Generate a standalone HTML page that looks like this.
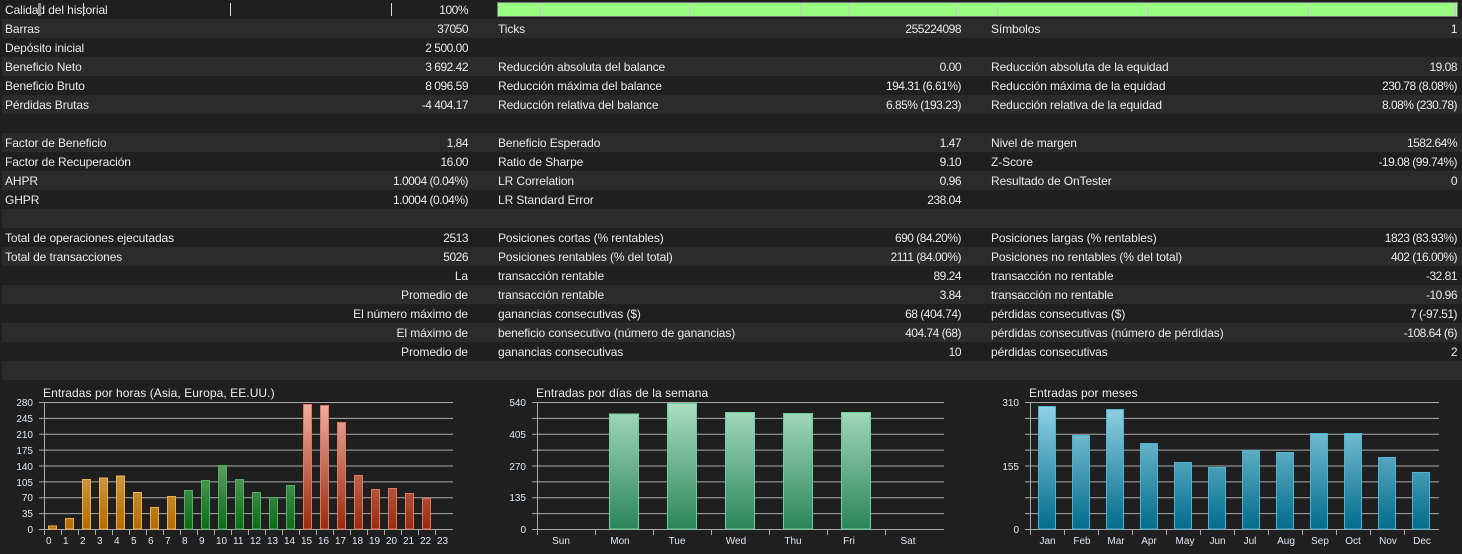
<!DOCTYPE html>
<html lang="es"><head><meta charset="utf-8"><title>Informe</title>
<style>
html,body{margin:0;padding:0;background:#1f1f1f}
#p{position:relative;width:1462px;height:554px;overflow:hidden;background:#1f1f1f;font:12px "Liberation Sans",sans-serif;color:#ebebeb}
.r{position:absolute;left:2px;right:0;height:19px;line-height:19px}
.l{background:#2b2b2b}
.r span{position:absolute;top:1px;white-space:nowrap}
.a,.c,.e{letter-spacing:-.1px}
.a{left:3px}.c{left:496px}.e{left:989px}
.b,.d,.f{letter-spacing:-.5px}
.b{right:994px}.d{right:501px}.f{right:5px}
.w{letter-spacing:-.1px!important}
#bar{position:absolute;left:497px;top:2px;width:959px;height:13px;border:1px solid #777;background:#99ff80}
#bar i{position:absolute;top:0;height:13px;width:1px;background:#c8c8c8}
.t{position:absolute;top:3px;height:13px;width:1px;background:#ddd}
svg{position:absolute;left:0;top:0}
svg text{font-family:"Liberation Sans",sans-serif}
.g{stroke:#aaa;stroke-width:1;fill:none}
.n{font-size:10px;fill:#dfe9f5}
.h{font-size:12px;fill:#eee;letter-spacing:.07px}
</style></head><body><div id="p">
<div class="r" style="top:0"><span class="a">Calidad del historial</span><span class="b">100%</span></div>
<div class="t" style="left:38px;width:3px;background:#8e8e98"></div><div class="t" style="left:83px"></div><div class="t" style="left:230px"></div><div class="t" style="left:391px"></div>
<div id="bar"><i style="left:42px"></i><i style="left:191px"></i><i style="left:302px"></i><i style="left:350px"></i><i style="left:458px"></i><i style="left:499px"></i><i style="left:649px"></i><i style="left:810px"></i><i style="left:956px;width:2px"></i></div>
<div class="r l" style="top:19px"><span class="a">Barras</span><span class="b">37050</span><span class="c">Ticks</span><span class="d">255224098</span><span class="e">Símbolos</span><span class="f">1</span></div>
<div class="r" style="top:38px"><span class="a">Depósito inicial</span><span class="b">2 500.00</span></div>
<div class="r l" style="top:57px"><span class="a">Beneficio Neto</span><span class="b">3 692.42</span><span class="c">Reducción absoluta del balance</span><span class="d">0.00</span><span class="e">Reducción absoluta de la equidad</span><span class="f">19.08</span></div>
<div class="r" style="top:76px"><span class="a">Beneficio Bruto</span><span class="b">8 096.59</span><span class="c">Reducción máxima del balance</span><span class="d">194.31 (6.61%)</span><span class="e">Reducción máxima de la equidad</span><span class="f">230.78 (8.08%)</span></div>
<div class="r l" style="top:95px"><span class="a">Pérdidas Brutas</span><span class="b">-4 404.17</span><span class="c">Reducción relativa del balance</span><span class="d">6.85% (193.23)</span><span class="e">Reducción relativa de la equidad</span><span class="f">8.08% (230.78)</span></div>
<div class="r l" style="top:133px"><span class="a">Factor de Beneficio</span><span class="b">1.84</span><span class="c">Beneficio Esperado</span><span class="d">1.47</span><span class="e">Nivel de margen</span><span class="f">1582.64%</span></div>
<div class="r" style="top:152px"><span class="a">Factor de Recuperación</span><span class="b">16.00</span><span class="c">Ratio de Sharpe</span><span class="d">9.10</span><span class="e">Z-Score</span><span class="f">-19.08 (99.74%)</span></div>
<div class="r l" style="top:171px"><span class="a">AHPR</span><span class="b">1.0004 (0.04%)</span><span class="c">LR Correlation</span><span class="d">0.96</span><span class="e">Resultado de OnTester</span><span class="f">0</span></div>
<div class="r" style="top:190px"><span class="a">GHPR</span><span class="b">1.0004 (0.04%)</span><span class="c">LR Standard Error</span><span class="d">238.04</span></div>
<div class="r l" style="top:209px"></div>
<div class="r" style="top:228px"><span class="a">Total de operaciones ejecutadas</span><span class="b">2513</span><span class="c">Posiciones cortas (% rentables)</span><span class="d">690 (84.20%)</span><span class="e">Posiciones largas (% rentables)</span><span class="f">1823 (83.93%)</span></div>
<div class="r l" style="top:247px"><span class="a">Total de transacciones</span><span class="b">5026</span><span class="c">Posiciones rentables (% del total)</span><span class="d">2111 (84.00%)</span><span class="e">Posiciones no rentables (% del total)</span><span class="f">402 (16.00%)</span></div>
<div class="r" style="top:266px"><span class="b w">La</span><span class="c">transacción rentable</span><span class="d">89.24</span><span class="e">transacción no rentable</span><span class="f">-32.81</span></div>
<div class="r l" style="top:285px"><span class="b w">Promedio de</span><span class="c">transacción rentable</span><span class="d">3.84</span><span class="e">transacción no rentable</span><span class="f">-10.96</span></div>
<div class="r" style="top:304px"><span class="b w">El número máximo de</span><span class="c">ganancias consecutivas ($)</span><span class="d">68 (404.74)</span><span class="e">pérdidas consecutivas ($)</span><span class="f">7 (-97.51)</span></div>
<div class="r l" style="top:323px"><span class="b w">El máximo de</span><span class="c">beneficio consecutivo (número de ganancias)</span><span class="d">404.74 (68)</span><span class="e">pérdidas consecutivas (número de pérdidas)</span><span class="f">-108.64 (6)</span></div>
<div class="r" style="top:342px"><span class="b w">Promedio de</span><span class="c">ganancias consecutivas</span><span class="d">10</span><span class="e">pérdidas consecutivas</span><span class="f">2</span></div>
<div class="r l" style="top:361px"></div>

<svg width="1462" height="554" viewBox="0 0 1462 554">
<defs>
<linearGradient id="o" gradientUnits="userSpaceOnUse" x1="0" y1="402" x2="0" y2="530"><stop offset="0" stop-color="#f0d2a0"/><stop offset="1" stop-color="#b06c00"/></linearGradient>
<linearGradient id="v" gradientUnits="userSpaceOnUse" x1="0" y1="402" x2="0" y2="530"><stop offset="0" stop-color="#a8d2b0"/><stop offset="1" stop-color="#0a6a14"/></linearGradient>
<linearGradient id="x" gradientUnits="userSpaceOnUse" x1="0" y1="402" x2="0" y2="530"><stop offset="0" stop-color="#efb2a2"/><stop offset="1" stop-color="#952a0e"/></linearGradient>
<linearGradient id="w" gradientUnits="userSpaceOnUse" x1="0" y1="402" x2="0" y2="530"><stop offset="0" stop-color="#aadfc2"/><stop offset="1" stop-color="#2a8458"/></linearGradient>
<linearGradient id="z" gradientUnits="userSpaceOnUse" x1="0" y1="402" x2="0" y2="530"><stop offset="0" stop-color="#96d5e6"/><stop offset="1" stop-color="#006a8a"/></linearGradient>
</defs>

<!-- chart 1 -->
<text class="h" x="43" y="397">Entradas por horas (Asia, Europa, EE.UU.)</text>
<path class="g" d="M39 402.5H453M39 418.4H453M39 434.25H453M39 450.1H453M39 466H453M39 481.9H453M39 497.75H453M39 513.6H453M39 529.5H453"/>
<path class="g" d="M44.5 402V535M61.5 530V535M78.5 530V535M95.5 530V535M112.5 530V535M129.5 530V535M146.5 530V535M163.5 530V535M180.5 530V535M197.5 530V535M214.5 530V535M231.5 530V535M248.5 530V535M265.5 530V535M282.5 530V535M299.5 530V535M316.5 530V535M333.5 530V535M350.5 530V535M367.5 530V535M384.5 530V535M401.5 530V535M418.5 530V535M435.5 530V535"/>
<g fill="url(#o)" stroke="#f0ac48">
<rect x="48.5" y="526" width="8" height="3"/><rect x="65.5" y="518.5" width="8" height="10.5"/><rect x="82.5" y="479.5" width="8" height="49.5"/><rect x="99.5" y="478" width="8" height="51"/><rect x="116.5" y="476" width="8" height="53"/><rect x="133.5" y="492.5" width="8" height="36.5"/><rect x="150.5" y="507.5" width="8" height="21.5"/><rect x="167.5" y="496.5" width="8" height="32.5"/>
</g>
<g fill="url(#v)" stroke="#4fb060">
<rect x="184.5" y="490.5" width="8" height="38.5"/><rect x="201.5" y="480.5" width="8" height="48.5"/><rect x="218.5" y="465.5" width="8" height="63.5"/><rect x="235.5" y="479.5" width="8" height="49.5"/><rect x="252.5" y="492.5" width="8" height="36.5"/><rect x="269.5" y="497.5" width="8" height="31.5"/><rect x="286.5" y="485.5" width="8" height="43.5"/>
</g>
<g fill="url(#x)" stroke="#e8735a">
<rect x="303.5" y="404.5" width="8" height="124.5"/><rect x="320.5" y="405.5" width="8" height="123.5"/><rect x="337.5" y="422.5" width="8" height="106.5"/><rect x="354.5" y="475.5" width="8" height="53.5"/><rect x="371.5" y="489.5" width="8" height="39.5"/><rect x="388.5" y="488.5" width="8" height="40.5"/><rect x="405.5" y="493.5" width="8" height="35.5"/><rect x="422.5" y="498.5" width="8" height="30.5"/>
</g>
<g class="n" text-anchor="end"><text x="33" y="406">280</text><text x="33" y="422">245</text><text x="33" y="438">210</text><text x="33" y="454">175</text><text x="33" y="470">140</text><text x="33" y="486">105</text><text x="33" y="501">70</text><text x="33" y="517">35</text><text x="33" y="533">0</text></g>
<g class="n"><text x="46" y="544">0</text><text x="63" y="544">1</text><text x="80" y="544">2</text><text x="97" y="544">3</text><text x="114" y="544">4</text><text x="131" y="544">5</text><text x="148" y="544">6</text><text x="165" y="544">7</text><text x="182" y="544">8</text><text x="199" y="544">9</text><text x="216" y="544">10</text><text x="233" y="544">11</text><text x="250" y="544">12</text><text x="267" y="544">13</text><text x="284" y="544">14</text><text x="301" y="544">15</text><text x="318" y="544">16</text><text x="335" y="544">17</text><text x="352" y="544">18</text><text x="369" y="544">19</text><text x="386" y="544">20</text><text x="403" y="544">21</text><text x="420" y="544">22</text><text x="437" y="544">23</text></g>

<!-- chart 2 -->
<text class="h" x="536" y="397">Entradas por días de la semana</text>
<path class="g" d="M532 402.5H944M532 418.4H944M532 434.25H944M532 450.1H944M532 466H944M532 481.9H944M532 497.75H944M532 513.6H944M532 529.5H944"/>
<path class="g" d="M537.5 402V535M595.5 530V535M653.5 530V535M711.5 530V535M769.5 530V535M827.5 530V535M885.5 530V535"/>
<g fill="url(#w)" stroke="#6fcf9f">
<rect x="609.5" y="414" width="29" height="115"/><rect x="667.5" y="403.5" width="29" height="125.5"/><rect x="725.5" y="412.5" width="29" height="116.5"/><rect x="783.5" y="413.5" width="29" height="115.5"/><rect x="841.5" y="412.5" width="29" height="116.5"/>
</g>
<g class="n" text-anchor="end"><text x="526" y="406">540</text><text x="526" y="438">405</text><text x="526" y="470">270</text><text x="526" y="501">135</text><text x="526" y="533">0</text></g>
<g class="n" text-anchor="middle"><text x="561" y="544">Sun</text><text x="620" y="544">Mon</text><text x="677" y="544">Tue</text><text x="736" y="544">Wed</text><text x="793" y="544">Thu</text><text x="849" y="544">Fri</text><text x="908" y="544">Sat</text></g>

<!-- chart 3 -->
<text class="h" x="1029" y="397">Entradas por meses</text>
<path class="g" d="M1025 402.5H1439M1025 418.4H1439M1025 434.25H1439M1025 450.1H1439M1025 466H1439M1025 481.9H1439M1025 497.75H1439M1025 513.6H1439M1025 529.5H1439"/>
<path class="g" d="M1030.5 402V535M1064.5 530V535M1098.5 530V535M1132.5 530V535M1166.5 530V535M1200.5 530V535M1234.5 530V535M1268.5 530V535M1302.5 530V535M1336.5 530V535M1370.5 530V535M1404.5 530V535"/>
<g fill="url(#z)" stroke="#4bb4d4">
<rect x="1038.5" y="406.5" width="17" height="122.5"/><rect x="1072.5" y="435.5" width="17" height="93.5"/><rect x="1106.5" y="409.5" width="17" height="119.5"/><rect x="1140.5" y="443.5" width="17" height="85.5"/><rect x="1174.5" y="462.5" width="17" height="66.5"/><rect x="1208.5" y="467.5" width="17" height="61.5"/><rect x="1242.5" y="450.5" width="17" height="78.5"/><rect x="1276.5" y="452.5" width="17" height="76.5"/><rect x="1310.5" y="433.5" width="17" height="95.5"/><rect x="1344.5" y="433.5" width="17" height="95.5"/><rect x="1378.5" y="457.5" width="17" height="71.5"/><rect x="1412.5" y="472.5" width="17" height="56.5"/>
</g>
<g class="n" text-anchor="end"><text x="1019" y="406">310</text><text x="1019" y="470">155</text><text x="1019" y="533">0</text></g>
<g class="n" text-anchor="middle"><text x="1047.5" y="544">Jan</text><text x="1082" y="544">Feb</text><text x="1116" y="544">Mar</text><text x="1149" y="544">Apr</text><text x="1185" y="544">May</text><text x="1217.5" y="544">Jun</text><text x="1250" y="544">Jul</text><text x="1286" y="544">Aug</text><text x="1320" y="544">Sep</text><text x="1353" y="544">Oct</text><text x="1388" y="544">Nov</text><text x="1422" y="544">Dec</text></g>
</svg>
</div></body></html>
